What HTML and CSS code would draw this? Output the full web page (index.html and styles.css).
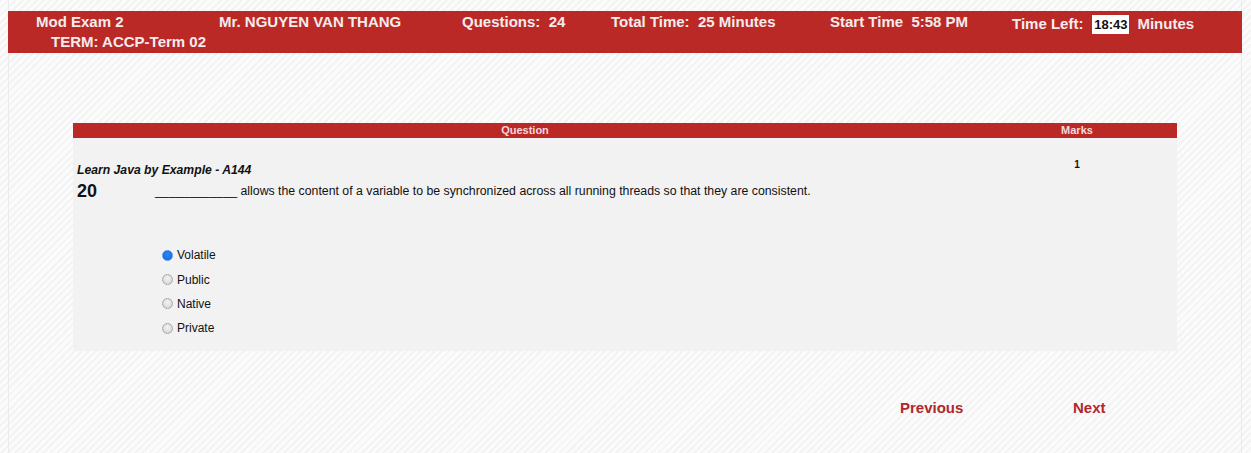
FILE: index.html
```html
<!DOCTYPE html>
<html>
<head>
<meta charset="utf-8">
<link rel="stylesheet" href="styles.css">
</head>
<body>
<div class="page">
  <div class="topbar">
    <div class="cell c1">
      <div>Mod Exam 2</div>
      <div class="term">TERM: ACCP-Term 02</div>
    </div>
    <div class="cell c2">Mr. NGUYEN VAN THANG</div>
    <div class="cell c3">Questions:&nbsp; 24</div>
    <div class="cell c4">Total Time:&nbsp; 25 Minutes</div>
    <div class="cell c5">Start Time&nbsp; 5:58 PM</div>
    <div class="cell c6"><span>Time Left:</span><span class="clock">18:43</span><span>Minutes</span></div>
  </div>

  <div class="qtable">
    <div class="qhead">
      <div class="hq">Question</div>
      <div class="hm">Marks</div>
    </div>
    <div class="qbody">
      <div class="qcell">
        <div class="qtitle">Learn Java by Example - A144</div>
        <div class="qline">
          <div class="qnum">20</div>
          <div class="qtext">____________ allows the content of a variable to be synchronized across all running threads so that they are consistent.</div>
        </div>
        <div class="options">
          <label class="opt"><span class="radio checked"></span>Volatile</label>
          <label class="opt"><span class="radio"></span>Public</label>
          <label class="opt"><span class="radio"></span>Native</label>
          <label class="opt"><span class="radio"></span>Private</label>
        </div>
      </div>
      <div class="mcell">1</div>
    </div>
  </div>

  <div class="nav">
    <a class="prev">Previous</a>
    <a class="next">Next</a>
  </div>
</div>
</body>
</html>
```
FILE: styles.css
```css
html, body {
  margin: 0;
  padding: 0;
}
body {
  font-family: "Liberation Sans", Arial, sans-serif;
  background-color: #f6f6f6;
  background-image: repeating-linear-gradient(135deg, #f3f3f3 0 2px, #fbfbfb 2px 5px);
  height: 453px;
  overflow: hidden;
}
.page {
  margin: 0 9px 0 8px;
  padding-top: 11px;
  border-left: 1px solid #ebebeb;
  border-right: 1px solid #ebebeb;
  height: 442px;
}
.topbar {
  margin: 0 -1px;
  background: #bb2927;
  color: #f4ecec;
  font-weight: bold;
  font-size: 15px;
  line-height: 20px;
  padding: 1px 0 1px 28px;
  height: 40px;
  display: flex;
}
.cell { white-space: nowrap; }
.c1 { width: 183px; }
.c1 .term { padding-left: 15px; }
.c2 { width: 243px; }
.c3 { width: 149px; }
.c4 { width: 219px; }
.c5 { width: 182px; }
.c6 {
  display: flex;
  align-items: center;
  height: 20px;
  margin-top: 2px;
}
.clock {
  background: #fff;
  color: #111;
  font-size: 13px;
  line-height: 19px;
  width: 37px;
  text-align: center;
  margin: 0 8px 0 9px;
}
.qtable {
  margin: 70px 0 0 64px;
  width: 1104px;
}
.qhead {
  display: flex;
  background: #bb2927;
  color: #f3dada;
  font-size: 11px;
  font-weight: bold;
  height: 15px;
  line-height: 15px;
}
.hq { width: 904px; text-align: center; }
.hm { width: 200px; text-align: center; }
.qbody {
  display: flex;
  background: #f2f2f2;
  padding-bottom: 10px;
}
.qcell {
  width: 900px;
  padding: 25px 0 0 4px;
}
.qtitle {
  font-size: 12.2px;
  font-weight: bold;
  font-style: italic;
  line-height: 14px;
  color: #111;
}
.qline {
  display: flex;
  align-items: center;
  height: 22px;
  margin-top: 3px;
}
.qnum {
  width: 78px;
  font-size: 18px;
  font-weight: bold;
  color: #111;
}
.qtext {
  font-size: 12.3px;
  color: #111;
}
.options {
  margin-top: 41px;
  padding-left: 85px;
}
.opt {
  display: flex;
  align-items: center;
  height: 24.4px;
  font-size: 12px;
  color: #111;
}
.radio {
  width: 11px;
  height: 11px;
  border-radius: 50%;
  box-sizing: border-box;
  border: 1px solid #a9a9a9;
  background: radial-gradient(circle at 50% 40%, #f4f4f4 0, #d6d6d6 80%);
  margin-right: 4px;
}
.radio.checked {
  border-color: #4b8ee8;
  background: radial-gradient(circle at 50% 40%, #2f86f2 0, #1366e0 90%);
}
.mcell {
  width: 200px;
  text-align: center;
  font-size: 10px;
  font-weight: bold;
  color: #111;
  padding-top: 22px;
  line-height: 10px;
}
.nav {
  display: flex;
  margin: 47px 0 0 891px;
  font-size: 15px;
  font-weight: bold;
  line-height: 20px;
}
.nav a {
  color: #b0282a;
  cursor: pointer;
}
.prev { width: 173px; }
```
